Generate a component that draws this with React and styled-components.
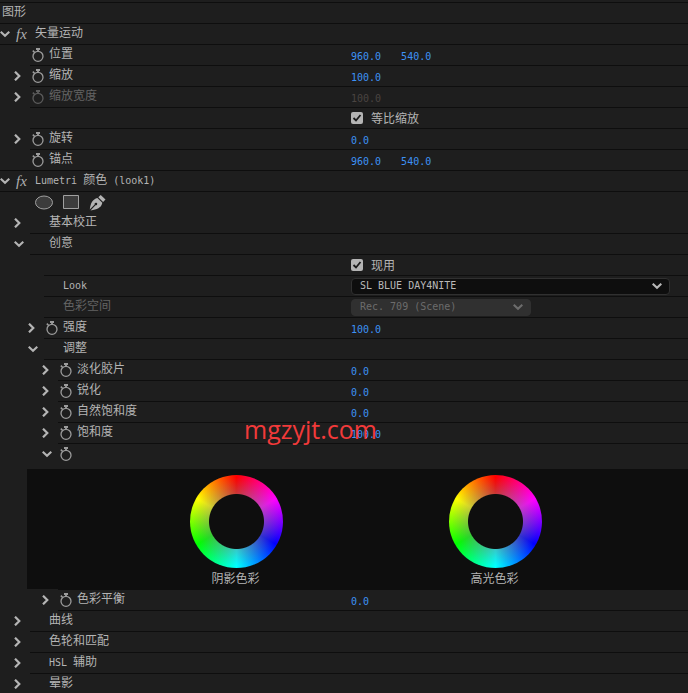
import React from 'react';
import styled, {createGlobalStyle} from 'styled-components';

const GlobalStyle = createGlobalStyle`
*, *:before, *:after {
box-sizing: border-box;
}
body {
margin: 0;
background: #1e1e1e;
}
button, select, input {
margin: 0;
font: inherit;
color: inherit;
}
`;

const Panel = styled.main`
position: relative;
min-height: 100vh;
overflow: hidden;
color: #b4b4b4;
background: #1e1e1e;
font: 12px/20px "Noto Sans CJK SC", sans-serif;
`;

const TopEdge = styled.div`
height: 3px;
border-bottom: 1px solid #0e0e0e;
`;

const RowContainer = styled.div`
display: grid;
grid-template-columns: 351px minmax(0, 1fr);
height: ${({$tall}) => ($tall ? 25 : 21)}px;
padding-bottom: ${({$tall}) => ($tall ? 4 : 0)}px;
background: linear-gradient(#0e0e0e, #0e0e0e) right bottom / calc(100% - ${({$line}) => $line}px) ${({$noLine}) => ($noLine ? 0 : 1)}px no-repeat;
`;

const NameCell = styled.div`
display: grid;
grid-template-columns: 16px 19px 1fr;
height: 20px;
padding-left: ${({$level}) => $level * 14}px;
color: ${({$disabled}) => ($disabled ? '#646464' : 'inherit')};
`;

const ValueCell = styled.div`
display: flex;
align-items: center;
gap: 20px;
height: 20px;
padding-right: 18px;
`;

const Twirl = styled.button`
display: flex;
align-items: center;
width: 10px;
height: 20px;
padding: 0;
border: 0;
color: #b4b4b4;
background: none;
`;

const Toggle = styled.button`
display: flex;
align-items: center;
width: 16px;
height: 20px;
padding: 0;
border: 0;
color: ${({$disabled}) => ($disabled ? '#5c5c5c' : '#9c9c9c')};
background: none;
`;

const Fx = styled.span`
font: italic 15px/20px "Liberation Serif", serif;
color: #b0b0b0;
`;

const Name = styled.span`
height: 16px;
line-height: 16px;
white-space: pre;
`;

const Latin = styled.span`
font-family: "DejaVu Sans Mono", monospace;
font-size: 10px;
`;

const Title = styled.h1`
height: 21px;
margin: 0;
padding-left: 2px;
font-size: 12px;
font-weight: 400;
line-height: 16px;
border-bottom: 1px solid #0e0e0e;
`;

const HotValue = styled.button`
padding: 3px 0 0;
border: 0;
background: none;
color: ${({$disabled}) => ($disabled ? '#4a4441' : '#3d92f5')};
font: 10px/17px "DejaVu Sans Mono", monospace;
`;

const CheckLabel = styled.label`
display: flex;
align-items: center;
gap: 8px;
`;

const CheckBox = styled.span`
display: grid;
width: 12px;
height: 12px;

input, svg {
grid-area: 1 / 1;
width: 12px;
height: 12px;
}
input {
appearance: none;
border-radius: 2px;
background: #b4b4b4;
}
svg {
pointer-events: none;
visibility: hidden;
}
input:checked + svg {
visibility: visible;
}
`;

const SelectBox = styled.span`
display: grid;
align-items: center;
flex: ${({$wide}) => ($wide ? '1' : '0 0 180px')};
height: 17px;
color: ${({$wide}) => ($wide ? '#b8b8b8' : '#6c6c6c')};

select, svg {
grid-area: 1 / 1;
}
select {
appearance: none;
width: 100%;
height: 17px;
padding: 0 24px 1px 8px;
border: 1px solid #303030;
border-radius: 4px;
background: ${({$wide}) => ($wide ? '#0e0e0e' : '#303030')};
font: 10px/14px "DejaVu Sans Mono", monospace;
opacity: 1;
}
svg {
justify-self: end;
margin-right: 8px;
pointer-events: none;
}
`;

const MaskTools = styled.div`
display: flex;
align-items: center;
gap: 9px;
height: 21px;
padding-left: 35px;
`;

const ToolButton = styled.button`
display: flex;
padding: 0;
border: 0;
background: none;
`;

const WheelPanel = styled.section`
display: flex;
justify-content: center;
gap: 166px;
height: 120px;
margin-left: 27px;
padding: 6px 0 0 17px;
background: #0e0e0e;
`;

const WheelLine = styled.div`
height: 1px;
margin-left: 58px;
background: #0e0e0e;
`;

const WheelFigure = styled.figure`
width: 93px;
margin: 0;
text-align: center;
`;

const Wheel = styled.div`
width: 93px;
height: 93px;
border-radius: 50%;
background:
radial-gradient(circle, #0e0e0e 27px, rgba(128, 128, 128, .42) 28px, rgba(128, 128, 128, 0) 44px),
conic-gradient(#f00, #f0f, #00f, #0ff, #0f0, #ff0, #f00);
`;

const WheelName = styled.figcaption`
padding-right: 2px;
line-height: 20px;
`;

const Watermark = styled.div`
position: absolute;
top: 412px;
left: 244px;
color: #f23a3a;
font: 25px/34px "Open Sans", sans-serif;
pointer-events: none;
`;

const ChevronDown = () => (
    <svg width="10" height="8" viewBox="0 0 10 8" fill="none" stroke="currentColor" strokeWidth="2.2">
        <path d="M.7 1.700 5 5.700 9.300 1.700"/>
    </svg>
);

const ChevronRight = () => (
    <svg width="8" height="10" viewBox="0 0 8 10" fill="none" stroke="currentColor" strokeWidth="2.2">
        <path d="M1 .7 5.300 5 1 9.300"/>
    </svg>
);

const Stopwatch = () => (
    <svg width="16" height="14" viewBox="0 0 16 14" fill="none" stroke="currentColor">
        <circle cx="8" cy="8.300" r="5" strokeWidth="1.3"/>
        <path d="M6 1h4M8 1.500v2" strokeWidth="1.8"/>
        <path d="M2.800 2.600l1.700 1.700" strokeWidth="1.5"/>
    </svg>
);

// latin runs use the half-width mono face, the rest stays in the CJK face
const MixedText = ({text}) => text.split(/([\x20-\x7e]+)/).map((part, index) => (
    index % 2 ? <Latin key={index}>{part}</Latin> : part
));

const rows = [
    {name: '矢量运动', level: 0, line: 0, open: true, fx: true},
    {name: '位置', level: 1, line: 30, watch: true, values: ['960.0', '540.0']},
    {name: '缩放', level: 1, line: 30, open: false, watch: true, values: ['100.0']},
    {name: '缩放宽度', level: 1, line: 30, open: false, watch: true, disabled: true, values: ['100.0']},
    {name: '', level: 1, line: 30, check: '等比缩放'},
    {name: '旋转', level: 1, line: 30, open: false, watch: true, values: ['0.0']},
    {name: '锚点', level: 1, line: 0, watch: true, values: ['960.0', '540.0']},
    {name: 'Lumetri 颜色 (look1)', level: 0, line: 0, open: true, fx: true, tools: true},
    {name: '基本校正', level: 1, line: 30, open: false},
    {name: '创意', level: 1, line: 30, open: true},
    {name: '', level: 2, line: 44, check: '现用'},
    {name: 'Look', level: 2, line: 44, option: 'SL BLUE DAY4NITE'},
    {name: '色彩空间', level: 2, line: 44, disabled: true, option: 'Rec. 709 (Scene)'},
    {name: '强度', level: 2, line: 44, open: false, watch: true, values: ['100.0']},
    {name: '调整', level: 2, line: 44, open: true},
    {name: '淡化胶片', level: 3, line: 58, open: false, watch: true, values: ['0.0']},
    {name: '锐化', level: 3, line: 58, open: false, watch: true, values: ['0.0']},
    {name: '自然饱和度', level: 3, line: 58, open: false, watch: true, values: ['0.0']},
    {name: '饱和度', level: 3, line: 58, open: false, watch: true, values: ['100.0']},
    {name: '', level: 3, line: 58, open: true, watch: true, wheels: ['阴影色彩', '高光色彩']},
    {name: '色彩平衡', level: 3, line: 58, open: false, watch: true, values: ['0.0']},
    {name: '曲线', level: 1, line: 30, open: false},
    {name: '色轮和匹配', level: 1, line: 30, open: false},
    {name: 'HSL 辅助', level: 1, line: 30, open: false},
    {name: '晕影', level: 1, line: 30, open: false}
];

const Tools = () => (
    <MaskTools>
        <ToolButton type="button" aria-label="椭圆">
            <svg width="18" height="16" viewBox="0 0 18 16" fill="#3c3c3c" stroke="#a0a0a0">
                <ellipse cx="9" cy="7.500" rx="8.500" ry="6.500"/>
            </svg>
        </ToolButton>
        <ToolButton type="button" aria-label="矩形">
            <svg width="18" height="16" viewBox="0 0 18 16" fill="#3c3c3c" stroke="#a0a0a0">
                <path d="M1.500 .5h15v13h-15z"/>
            </svg>
        </ToolButton>
        <ToolButton type="button" aria-label="钢笔">
            <svg width="18" height="16" viewBox="0 0 18 16" fill="#b4b4b4">
                <path d="M11.700 0 16.500 4.600l-2.400 2.400L9.300 2.300z"/>
                <path d="M8.400 3 13.300 7.800c-.6 3.700-3.300 6.200-9.300 7.200l-2.500.5 5-5.300a1.300 1.300 0 1 0-.8-.8L.8 14.500C1.500 8 3.700 4.300 8.400 3z"/>
            </svg>
        </ToolButton>
    </MaskTools>
);

const Row = ({item}) => {
    const {name, level, line, open, fx, watch, disabled, values = [], check, option, wheels} = item;

    return (
        <RowContainer $line={line} $tall={!!wheels} $noLine={!!wheels}>
            <NameCell $level={level} $disabled={disabled}>
                {open === undefined ? <span/> : (
                    <Twirl type="button" aria-expanded={open} aria-label={name || '色轮'}>
                        {open ? <ChevronDown/> : <ChevronRight/>}
                    </Twirl>
                )}
                {fx && <Fx>fx</Fx>}
                {watch && (
                    <Toggle type="button" $disabled={disabled} aria-label="切换动画">
                        <Stopwatch/>
                    </Toggle>
                )}
                {!fx && !watch && <span/>}
                <Name as={option ? 'label' : 'span'} htmlFor={option ? name : undefined}>
                    <MixedText text={name}/>
                </Name>
            </NameCell>
            <ValueCell>
                {values.map((value, index) => (
                    <HotValue key={index} type="button" $disabled={disabled} disabled={disabled}>{value}</HotValue>
                ))}
                {check && (
                    <CheckLabel>
                        <CheckBox>
                            <input type="checkbox" defaultChecked/>
                            <svg viewBox="0 0 12 12" fill="none" stroke="#1a1a1a" strokeWidth="1.8">
                                <path d="M2.500 6 5 8.500 9.500 3"/>
                            </svg>
                        </CheckBox>
                        {check}
                    </CheckLabel>
                )}
                {option && (
                    <SelectBox $wide={!disabled}>
                        <select id={name} disabled={disabled}>
                            <option>{option}</option>
                        </select>
                        <ChevronDown/>
                    </SelectBox>
                )}
            </ValueCell>
        </RowContainer>
    );
};

const App = () => (
    <Panel>
        <GlobalStyle/>
        <TopEdge/>
        <Title>图形</Title>
        {rows.map((item, index) => (
            <React.Fragment key={index}>
                <Row item={item}/>
                {item.tools && <Tools/>}
                {item.wheels && (
                    <>
                        <WheelPanel>
                            {item.wheels.map(name => (
                                <WheelFigure key={name}>
                                    <Wheel/>
                                    <WheelName>{name}</WheelName>
                                </WheelFigure>
                            ))}
                        </WheelPanel>
                        <WheelLine/>
                    </>
                )}
            </React.Fragment>
        ))}
        <Watermark>mgzyjt.com</Watermark>
    </Panel>
);

export default App;
